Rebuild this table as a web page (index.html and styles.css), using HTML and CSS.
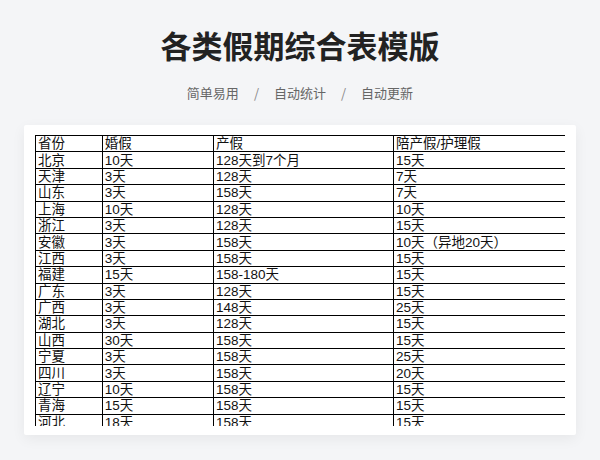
FILE: index.html
```html
<!DOCTYPE html>
<html lang="zh">
<head>
<meta charset="utf-8">
<title>各类假期综合表模版</title>
<link rel="stylesheet" href="styles.css">
</head>
<body>
<header class="hero">
  <h1 class="title">各类假期综合表模版</h1>
  <p class="tags"><span>简单易用</span><span class="sep">/</span><span>自动统计</span><span class="sep">/</span><span>自动更新</span></p>
</header>
<main class="card">
  <div class="sheet">
    <table class="grid">
      <colgroup><col class="c1"><col class="c2"><col class="c3"><col class="c4"></colgroup>
      <tr><td>省份</td><td>婚假</td><td>产假</td><td>陪产假/护理假</td></tr>
      <tr><td>北京</td><td>10天</td><td>128天到7个月</td><td>15天</td></tr>
      <tr><td>天津</td><td>3天</td><td>128天</td><td>7天</td></tr>
      <tr><td>山东</td><td>3天</td><td>158天</td><td>7天</td></tr>
      <tr><td>上海</td><td>10天</td><td>128天</td><td>10天</td></tr>
      <tr><td>浙江</td><td>3天</td><td>128天</td><td>15天</td></tr>
      <tr><td>安徽</td><td>3天</td><td>158天</td><td>10天（异地20天）</td></tr>
      <tr><td>江西</td><td>3天</td><td>158天</td><td>15天</td></tr>
      <tr><td>福建</td><td>15天</td><td>158-180天</td><td>15天</td></tr>
      <tr><td>广东</td><td>3天</td><td>128天</td><td>15天</td></tr>
      <tr><td>广西</td><td>3天</td><td>148天</td><td>25天</td></tr>
      <tr><td>湖北</td><td>3天</td><td>128天</td><td>15天</td></tr>
      <tr><td>山西</td><td>30天</td><td>158天</td><td>15天</td></tr>
      <tr><td>宁夏</td><td>3天</td><td>158天</td><td>25天</td></tr>
      <tr><td>四川</td><td>3天</td><td>158天</td><td>20天</td></tr>
      <tr><td>辽宁</td><td>10天</td><td>158天</td><td>15天</td></tr>
      <tr><td>青海</td><td>15天</td><td>158天</td><td>15天</td></tr>
      <tr><td>河北</td><td>18天</td><td>158天</td><td>15天</td></tr>
    </table>
  </div>
</main>
</body>
</html>
```
FILE: styles.css
```css
html, body {
  margin: 0;
  padding: 0;
}
body {
  background: #f4f5f7;
  font-family: "Noto Sans CJK SC", sans-serif;
  width: 600px;
  height: 460px;
  overflow: hidden;
}
.hero {
  text-align: center;
  padding-top: 25px;
}
.title {
  margin: 0;
  font-size: 31px;
  line-height: 40px;
  font-weight: 700;
  letter-spacing: 0;
  color: #222;
}
.tags {
  margin: 18px 0 0;
  font-size: 13px;
  line-height: 20px;
  color: #666;
}
.sep {
  margin: 0 15px;
  color: #888;
}
.card {
  display: block;
  margin: 22px 24px 0;
  width: 552px;
  box-sizing: border-box;
  padding: 10px 11px 9px;
  background: #fff;
  border-radius: 2px;
  box-shadow: 0 4px 14px rgba(0, 0, 0, 0.06);
}
.sheet {
  height: 291px;
  overflow: hidden;
}
.grid {
  border-collapse: collapse;
  table-layout: fixed;
  width: 530px;
  font-family: "Liberation Sans", "Noto Sans CJK SC", sans-serif;
  font-size: 13.5px;
  color: #111;
}
.c1 { width: 66.7px; }
.c2 { width: 111.3px; }
.c3 { width: 180px; }
.c4 { width: 172px; }
.grid td {
  border: 1.5px solid #000;
  height: 16.4px;
  padding: 0 2px;
  line-height: 15px;
  box-sizing: border-box;
  white-space: nowrap;
  overflow: hidden;
  vertical-align: middle;
}
```
